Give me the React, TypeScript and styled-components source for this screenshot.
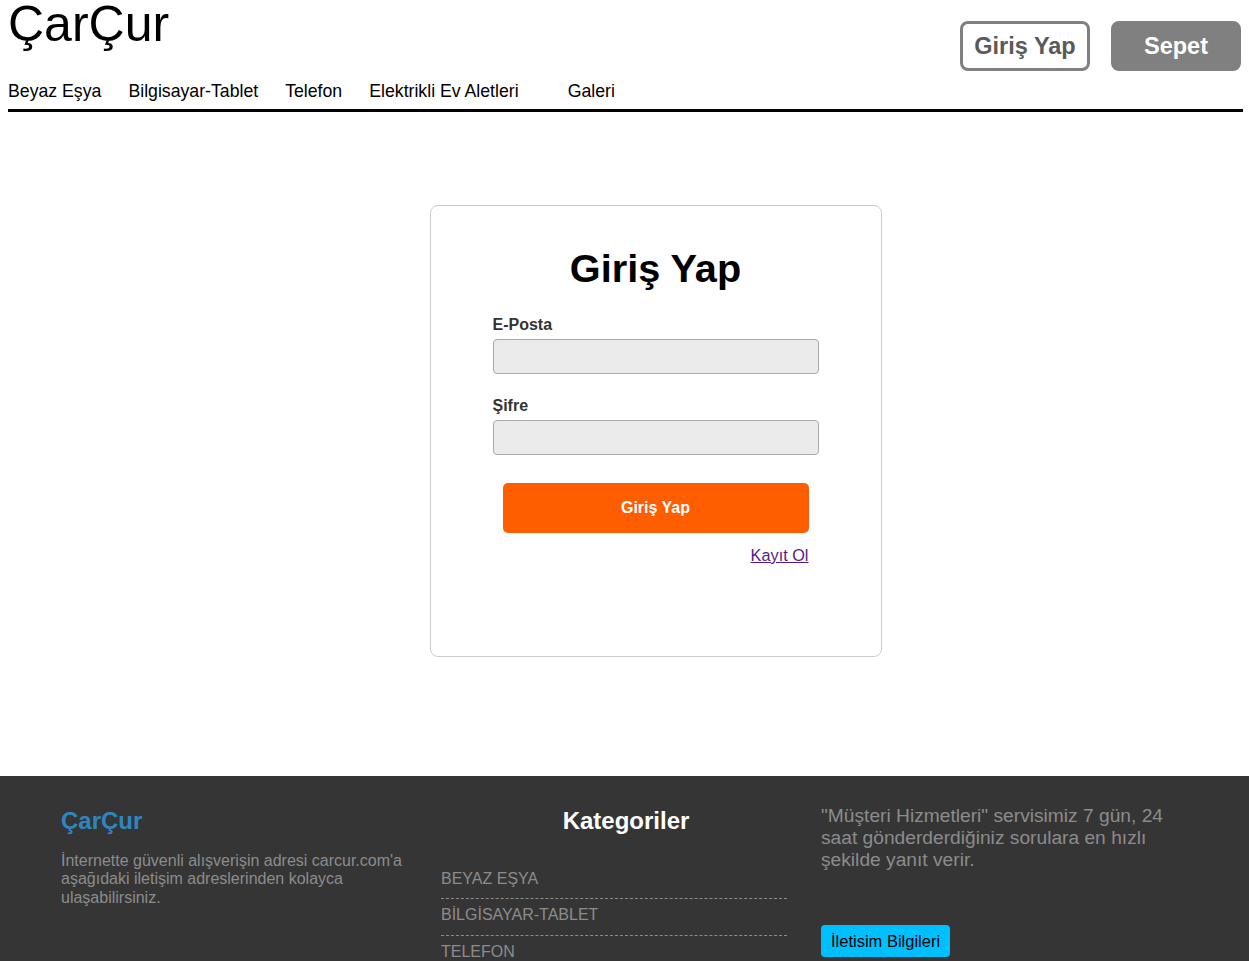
import React from "react";
import styled, { createGlobalStyle } from "styled-components";

const GlobalStyle = createGlobalStyle`
  body {
    margin: 0;
    font-family: "Liberation Sans", Arial, sans-serif;
    background: #fff;
  }
`;

const navItems = [
  { label: "Beyaz Eşya" },
  { label: "Bilgisayar-Tablet" },
  { label: "Telefon" },
  { label: "Elektrikli Ev Aletleri" },
  { label: "Galeri", extra: 22 },
];

const categories = ["BEYAZ EŞYA", "BİLGİSAYAR-TABLET", "TELEFON"];

const App = () => {
  return (
    <>
      <GlobalStyle />
      <Header>
        <Brand>
          <Logo>ÇarÇur</Logo>
          <Nav>
            {navItems.map((item) => (
              <NavLink key={item.label} $extra={item.extra}>
                {item.label}
              </NavLink>
            ))}
          </Nav>
        </Brand>
        <Actions>
          <HeaderButton>Giriş Yap</HeaderButton>
          <HeaderButton $filled>Sepet</HeaderButton>
        </Actions>
      </Header>

      <Main>
        <Card>
          <CardTitle>Giriş Yap</CardTitle>
          <Form>
            <Field>
              <Label>E-Posta</Label>
              <Input type="email" />
            </Field>
            <Field>
              <Label>Şifre</Label>
              <Input type="password" />
            </Field>
            <Submit type="button">Giriş Yap</Submit>
            <RegisterRow>
              <RegisterLink href="#">Kayıt Ol</RegisterLink>
            </RegisterRow>
          </Form>
        </Card>
      </Main>

      <Footer>
        <Column>
          <FooterBrand>ÇarÇur</FooterBrand>
          <FooterText>
            İnternette güvenli alışverişin adresi carcur.com'a aşağıdaki
            iletişim adreslerinden kolayca ulaşabilirsiniz.
          </FooterText>
        </Column>
        <Column>
          <FooterHeading>Kategoriler</FooterHeading>
          <CategoryList>
            {categories.map((c) => (
              <CategoryItem key={c}>{c}</CategoryItem>
            ))}
          </CategoryList>
        </Column>
        <Column>
          <ServiceText>
            "Müşteri Hizmetleri" servisimiz 7 gün, 24 saat gönderderdiğiniz
            sorulara en hızlı şekilde yanıt verir.
          </ServiceText>
          <ContactButton type="button">İletisim Bilgileri</ContactButton>
        </Column>
      </Footer>
    </>
  );
};

export default App;

const Header = styled.header`
  display: flex;
  justify-content: space-between;
  align-items: flex-start;
  margin: 0 6px 0 8px;
  border-bottom: 3px solid #000;
`;

const Brand = styled.div`
  display: flex;
  flex-direction: column;
`;

const Logo = styled.h1`
  margin: 0;
  font-size: 50px;
  line-height: 48px;
  font-weight: 400;
  color: #000;
`;

const Nav = styled.nav`
  display: flex;
  gap: 27px;
  margin-top: 33px;
  padding-bottom: 8px;
`;

const NavLink = styled.a<{ $extra?: number }>`
  font-size: 17.7px;
  line-height: 20px;
  color: #000;
  text-decoration: none;
  margin-left: ${(p) => p.$extra ?? 0}px;
`;

const Actions = styled.div`
  display: flex;
  gap: 21px;
  margin-top: 21px;
  padding-right: 2px;
`;

const HeaderButton = styled.button<{ $filled?: boolean }>`
  width: 130px;
  height: 50px;
  box-sizing: border-box;
  border: 3px solid #808080;
  border-radius: 8px;
  background: ${(p) => (p.$filled ? "#808080" : "#fff")};
  color: ${(p) => (p.$filled ? "#fff" : "#5a5a5a")};
  font-family: "Liberation Sans", Arial, sans-serif;
  font-size: 23.5px;
  font-weight: 700;
  cursor: pointer;
`;

const Main = styled.main`
  display: flex;
  justify-content: center;
  padding: 93px 0 0 62px;
`;

const Card = styled.div`
  width: 452px;
  height: 452px;
  box-sizing: border-box;
  border: 1px solid #ccc;
  border-radius: 8px;
  padding: 40px 62px 0;
`;

const CardTitle = styled.h2`
  margin: 0;
  text-align: center;
  font-size: 39.7px;
  line-height: 44px;
  font-weight: 700;
  color: #000;
`;

const Form = styled.form`
  margin-top: 26px;
  display: flex;
  flex-direction: column;
`;

const Field = styled.div`
  display: flex;
  flex-direction: column;
  gap: 5px;
  margin-bottom: 23px;
`;

const Label = styled.label`
  font-size: 16px;
  line-height: 18px;
  font-weight: 700;
  color: #333;
`;

const Input = styled.input`
  width: 100%;
  height: 35px;
  box-sizing: border-box;
  background: #ebebeb;
  border: 1px solid #aaa;
  border-radius: 4px;
`;

const Submit = styled.button`
  margin: 5px 10px 0;
  height: 50px;
  border: none;
  border-radius: 5px;
  background: #ff5e00;
  color: #fff;
  font-family: "Liberation Sans", Arial, sans-serif;
  font-size: 16px;
  font-weight: 700;
  cursor: pointer;
`;

const RegisterRow = styled.div`
  display: flex;
  justify-content: flex-end;
  margin: 13px 10px 0;
`;

const RegisterLink = styled.a`
  font-size: 16.3px;
  line-height: 18px;
  color: #551a8b;
  text-decoration: underline;
`;

const Footer = styled.footer`
  margin-top: 119px;
  background: #353535;
  display: grid;
  grid-template-columns: repeat(3, 370px);
  column-gap: 10px;
  padding: 31px 0 60px 61px;
`;

const Column = styled.div`
  display: flex;
  flex-direction: column;
  align-items: flex-start;
`;

const FooterBrand = styled.h3`
  margin: 0;
  font-size: 24px;
  line-height: 28px;
  font-weight: 700;
  color: #2e86c1;
`;

const FooterText = styled.p`
  margin: 17px 0 0;
  font-size: 16px;
  line-height: 18.4px;
  color: #8c8c8c;
`;

const FooterHeading = styled.h3`
  margin: 0;
  align-self: stretch;
  text-align: center;
  font-size: 24px;
  line-height: 28px;
  font-weight: 700;
  color: #fff;
`;

const CategoryList = styled.ul`
  list-style: none;
  margin: 28px 0 0;
  padding: 0;
  width: 346px;
`;

const CategoryItem = styled.li`
  padding: 7px 0 10px;
  font-size: 16px;
  line-height: 18.4px;
  color: #8c8c8c;
  border-bottom: 1px dashed #8c8c8c;
`;

const ServiceText = styled.p`
  margin: -2px 0 0;
  font-size: 19.2px;
  line-height: 22px;
  color: #8c8c8c;
`;

const ContactButton = styled.button`
  margin-top: 54px;
  height: 32px;
  padding: 0 10px;
  border: none;
  border-radius: 4px;
  background: #00bfff;
  color: #000;
  font-family: "Liberation Sans", Arial, sans-serif;
  font-size: 16.5px;
  cursor: pointer;
`;
